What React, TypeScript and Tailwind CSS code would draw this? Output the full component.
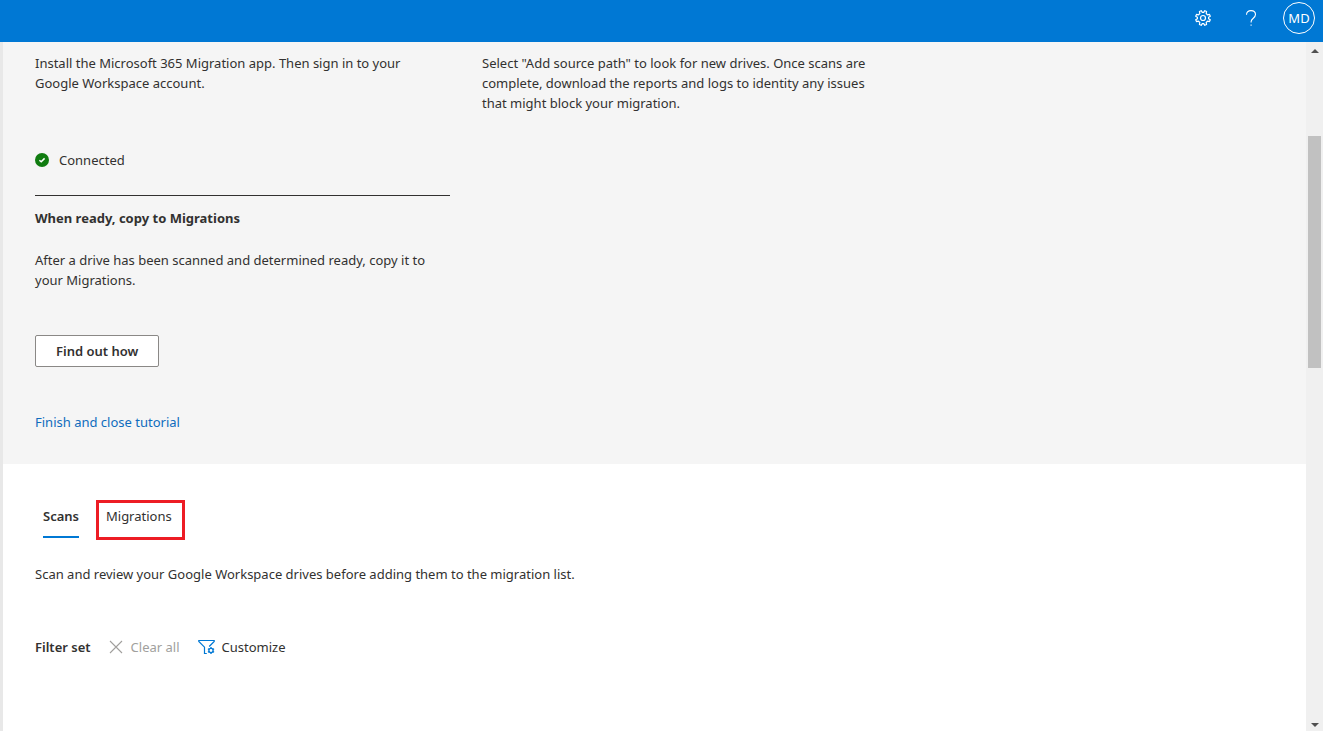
import type { ReactNode } from 'react';

interface StepProps {
  title?: string;
  children: ReactNode;
}

function GearIcon({ className }: { className?: string }) {
  return (
    <svg viewBox="0 0 16 16" fill="none" stroke="currentColor" strokeWidth="1.2" strokeLinejoin="round" className={className}>
      <path d="M9.8 0.7 L11.6 1.5 L11.2 3.5 L12.5 4.8 L14.5 4.4 L15.3 6.2 L13.6 7.3 V8.7 L15.3 9.8 L14.5 11.6 L12.5 11.2 L11.2 12.5 L11.6 14.5 L9.8 15.3 L8.7 13.6 H7.3 L6.2 15.3 L4.4 14.5 L4.8 12.5 L3.5 11.2 L1.5 11.6 L0.7 9.8 L2.4 8.7 V7.3 L0.7 6.2 L1.5 4.4 L3.5 4.8 L4.8 3.5 L4.4 1.5 L6.2 0.7 L7.3 2.4 H8.7 Z" />
      <circle cx="8" cy="8" r="2.5" />
    </svg>
  );
}

function HelpIcon({ className }: { className?: string }) {
  return (
    <svg viewBox="0 0 16 16" fill="none" stroke="currentColor" strokeWidth="1.1" className={className}>
      <path d="M3.5 4.8 C3.5 2.2 5.3 0.6 8 0.6 C10.7 0.6 12.5 2.2 12.5 4.6 C12.5 6.6 11.2 7.5 10 8.5 C8.8 9.5 8.1 10.3 8.1 11.8 V12.6" />
      <path d="M8.1 14.6 V15.8" />
    </svg>
  );
}

function ConnectedIcon({ className }: { className?: string }) {
  return (
    <svg viewBox="0 0 14 14" className={className}>
      <circle cx="7" cy="7" r="7" fill="#107c10" />
      <path d="M4.4 7.2 L6.2 8.8 L9.6 5.4" fill="none" stroke="#fff" strokeWidth="1.5" />
    </svg>
  );
}

function ClearIcon({ className }: { className?: string }) {
  return (
    <svg viewBox="0 0 14 14" fill="none" stroke="currentColor" strokeWidth="1.1" className={className}>
      <path d="M1 1 L13 13 M13 1 L1 13" />
    </svg>
  );
}

function FilterSettingsIcon({ className }: { className?: string }) {
  return (
    <svg viewBox="0 0 18 16" fill="none" stroke="currentColor" className={className}>
      <path d="M8.8 14.5 H6.5 V8.2 L0.8 2.4 V1.5 H16.2 V2.4 L11.2 7.5" strokeWidth="1.2" />
      <circle cx="13" cy="11.5" r="2.1" strokeWidth="1.3" />
      <path
        d="M13 8 V9.4 M13 13.6 V15 M9.9 9.7 L11.2 10.4 M14.8 12.6 L16.1 13.3 M9.9 13.3 L11.2 12.6 M14.8 10.4 L16.1 9.7"
        strokeWidth="1.3"
      />
    </svg>
  );
}

function Header() {
  return (
    <header className="flex h-[42px] shrink-0 items-start justify-end bg-[#0078d4] pr-2 text-white">
      <button aria-label="Settings" className="flex h-9 w-12 items-center justify-center">
        <GearIcon className="size-4" />
      </button>
      <button aria-label="Help" className="flex h-9 w-12 items-center justify-center">
        <HelpIcon className="size-4" />
      </button>
      <button className="mt-0.5 ml-2 flex size-8 items-center justify-center rounded-full border border-white">
        MD
      </button>
    </header>
  );
}

function Step({ title, children }: StepProps) {
  return (
    <div className="pr-4">
      {title && <h2 className="mb-[22px] font-bold">{title}</h2>}
      {children}
    </div>
  );
}

function Tutorial() {
  return (
    <section className="bg-[#f5f5f5] px-8 pt-[11px] pb-8">
      <div className="grid max-w-[862px] grid-cols-2 gap-x-8 gap-y-3">
        <div className="border-b border-[#323130] pb-[25px]">
          <Step>
            <p>Install the Microsoft 365 Migration app. Then sign in to your Google Workspace account.</p>
            <div className="mt-[57px] flex items-center gap-2.5">
              <ConnectedIcon className="size-3.5" />
              <span>Connected</span>
            </div>
          </Step>
        </div>
        <Step>
          <p>
            Select "Add source path" to look for new drives. Once scans are complete, download the reports and logs
            to identity any issues that might block your migration.
          </p>
        </Step>
        <Step title="When ready, copy to Migrations">
          <p>After a drive has been scanned and determined ready, copy it to your Migrations.</p>
          <button className="mt-[45px] h-8 rounded-xs border border-[#8a8886] bg-white px-5 font-semibold">
            Find out how
          </button>
        </Step>
      </div>
      <a href="#" className="mt-[45px] inline-block text-[#0f6cbd]">
        Finish and close tutorial
      </a>
    </section>
  );
}

function Scans() {
  return (
    <section className="px-8 pt-9">
      <div role="tablist" className="flex h-10 items-start gap-[17px] pl-2">
        <button role="tab" aria-selected="true" className="h-[38px] border-b-2 border-[#0078d4] pt-1.5 pb-2.5 font-semibold">
          Scans
        </button>
        <button role="tab" aria-selected="false" className="h-10 border-3 border-[#ed1c24] pt-[3px] pr-2.5 pb-3.5 pl-[7px]">
          Migrations
        </button>
      </div>
      <p className="mt-6">Scan and review your Google Workspace drives before adding them to the migration list.</p>
      <div className="mt-[53px] flex items-center gap-[18px]">
        <span className="font-semibold">Filter set</span>
        <button disabled className="flex items-center gap-2 text-[#a19f9d]">
          <ClearIcon className="size-3.5" />
          Clear all
        </button>
        <button className="flex items-center gap-1.5">
          <FilterSettingsIcon className="h-4 w-[18px] text-[#0078d4]" />
          Customize
        </button>
      </div>
    </section>
  );
}

function ScrollBar() {
  return (
    <div className="flex w-[17px] shrink-0 flex-col items-center justify-between bg-[#f0f0f0] pt-[3px] pb-1">
      <svg viewBox="0 0 8 4" className="mt-1 h-1 w-2 fill-[#505050]">
        <path d="M0 4 L4 0 L8 4 Z" />
      </svg>
      <div className="flex w-full flex-1 flex-col px-0.5 py-[83px]">
        <div className="h-[232px] bg-[#c1c1c1]" />
      </div>
      <svg viewBox="0 0 8 4" className="h-1 w-2 fill-[#505050]">
        <path d="M0 0 L4 4 L8 0 Z" />
      </svg>
    </div>
  );
}

export default function App() {
  return (
    <div className="flex h-screen flex-col bg-white font-['Noto_Sans','Open_Sans',sans-serif] text-[13px] leading-5 text-[#323130]">
      <Header />
      <div className="flex min-h-0 flex-1">
        <div className="w-[3px] shrink-0 bg-[#e8e8e8]" />
        <main className="min-w-0 flex-1 overflow-hidden">
          <Tutorial />
          <Scans />
        </main>
        <ScrollBar />
      </div>
    </div>
  );
}
